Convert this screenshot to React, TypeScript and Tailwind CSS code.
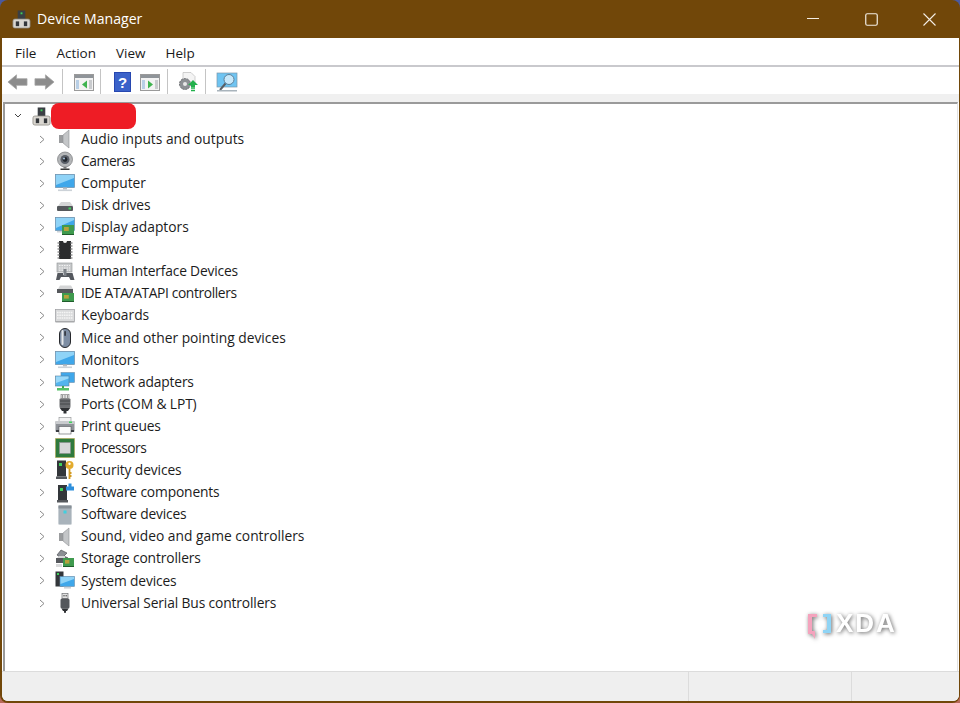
import type { ReactNode } from 'react';

const font = "font-['Open_Sans','Noto_Sans',sans-serif]";

// tower with the green light, used by the root node and the title bar
function DeviceIcon({ size = 20 }: { size?: number }) {
    return (
        <svg width={size} height={size} viewBox="0 0 20 20">
            <rect x="6" y="0.5" width="8" height="10" fill="#3b3f44" />
            <rect x="9" y="2.5" width="2" height="2" fill="#3fd05a" />
            <rect x="1" y="9.5" width="18" height="9.5" rx="2" fill="#d9d6d0" stroke="#8b8880" strokeWidth="0.8" />
            <rect x="4" y="12" width="3.5" height="5" fill="#33363a" />
            <rect x="12.5" y="12" width="3.5" height="5" fill="#33363a" />
        </svg>
    );
}

function Speaker() {
    return (
        <svg width="20" height="20" viewBox="0 0 20 20">
            <rect x="4" y="6" width="5" height="8" fill="#9a9c9e" />
            <path d="M8 6 L14 1 V19 L8 14 Z" fill="#c4c6c8" stroke="#8f9193" strokeWidth="0.6" />
        </svg>
    );
}

function Monitor() {
    return (
        <svg width="20" height="20" viewBox="0 0 20 20">
            <rect x="0.5" y="1.5" width="19" height="13" fill="#3fa7ea" stroke="#6d8ea8" strokeWidth="0.7" />
            <path d="M1 2h18v3L1 12z" fill="#8fd3f7" />
            <rect x="8" y="14.5" width="4" height="2" fill="#b6bcc2" />
            <rect x="3" y="16.5" width="14" height="1.6" fill="#ccd2d8" />
        </svg>
    );
}

function Board({ x, y, w = 10, h = 8 }: { x: number; y: number; w?: number; h?: number }) {
    return (
        <g>
            <rect x={x} y={y} width={w} height={h} fill="#3f9a4e" />
            <rect x={x + 2} y={y + 2} width={w / 2.5} height={h / 2.5} fill="#b7a23c" />
            <rect x={x} y={y + h - 1} width={w} height="1" fill="#1f5c2c" />
        </g>
    );
}

const icons: Record<string, ReactNode> = {
    audio: <Speaker />,
    camera: (
        <svg width="20" height="20" viewBox="0 0 20 20">
            <circle cx="10" cy="8.5" r="7.5" fill="#b4b6b8" stroke="#77797b" strokeWidth="0.7" />
            <circle cx="10" cy="8.5" r="4.5" fill="#5a5f68" />
            <circle cx="10" cy="8.5" r="2.4" fill="#23272e" />
            <circle cx="9" cy="7.5" r="0.9" fill="#b8d4ee" />
            <rect x="8.5" y="16" width="3" height="1.5" fill="#777" />
            <rect x="5.5" y="17.5" width="9" height="1.5" fill="#3a3a3a" />
        </svg>
    ),
    monitor: <Monitor />,
    disk: (
        <svg width="20" height="20" viewBox="0 0 20 20">
            <path d="M3 11 L6 7 H15 L18 11 Z" fill="#d4d5d6" />
            <rect x="2" y="11" width="16" height="5" rx="1" fill="#55585c" />
            <rect x="13.5" y="12.5" width="2.5" height="2" fill="#3fd05a" />
        </svg>
    ),
    display: (
        <svg width="20" height="20" viewBox="0 0 20 20">
            <rect x="0.5" y="0.5" width="19" height="13" fill="#3fa7ea" stroke="#6d8ea8" strokeWidth="0.7" />
            <path d="M1 1h18v2L1 11z" fill="#8fd3f7" />
            <rect x="2" y="14" width="6" height="1.5" fill="#ccd2d8" />
            <Board x={7} y={8} w={12} h={10} />
        </svg>
    ),
    firmware: (
        <svg width="20" height="20" viewBox="0 0 20 20">
            <rect x="4" y="1" width="12" height="18" fill="#2b2c2e" />
            <path d="M8 1a2 2 0 0 0 4 0z" fill="#f2f2f2" />
            <path d="M2.5 3h2M2.5 6h2M2.5 9h2M2.5 12h2M2.5 15h2M2.5 18h2M15.5 3h2M15.5 6h2M15.5 9h2M15.5 12h2M15.5 15h2M15.5 18h2" stroke="#8f8f8f" strokeWidth="1.3" />
        </svg>
    ),
    hid: (
        <svg width="20" height="20" viewBox="0 0 20 20">
            <rect x="2" y="1" width="15" height="9" fill="#c8cacc" stroke="#8d8f91" strokeWidth="0.6" />
            <path d="M4 3.5h11M4 6h11M4 8.2h11" stroke="#f2f2f2" strokeWidth="1" strokeDasharray="1.5 1" />
            <path d="M1 18 L2.5 11 H8 V13 H11 V11 H17.5 L19.5 18 H15.5 L14 15 H6 L4.5 18 Z" fill="#54585e" />
            <rect x="8.5" y="7" width="3" height="7" fill="#7c8187" />
        </svg>
    ),
    ide: (
        <svg width="20" height="20" viewBox="0 0 20 20">
            <path d="M3 5 L5 1.5 H16 L18 5 Z" fill="#d4d5d6" />
            <rect x="2" y="5" width="16" height="4" fill="#55585c" />
            <Board x={7} y={9} w={12} h={9} />
        </svg>
    ),
    keyboard: (
        <svg width="20" height="20" viewBox="0 0 20 20">
            <rect x="0.5" y="3.5" width="19" height="12" fill="#d9dadb" stroke="#9b9c9e" strokeWidth="0.7" />
            <path d="M2 6.5h16M2 9.2h16M2 12h16" stroke="#f5f5f5" strokeWidth="1.4" strokeDasharray="1.6 0.7" />
            <rect x="0.5" y="15" width="19" height="1.5" fill="#a8a9ab" />
        </svg>
    ),
    mouse: (
        <svg width="20" height="20" viewBox="0 0 20 20">
            <rect x="4.5" y="0.5" width="11" height="19" rx="5.5" fill="#7d8da3" stroke="#26282c" strokeWidth="1" />
            <rect x="6.5" y="2" width="2" height="15" rx="1" fill="#e4e7ea" />
            <rect x="9.3" y="3" width="1.6" height="5" rx="0.8" fill="#31353b" />
        </svg>
    ),
    network: (
        <svg width="20" height="20" viewBox="0 0 20 20">
            <rect x="6" y="0.5" width="13.5" height="10" fill="#3fa7ea" stroke="#6d8ea8" strokeWidth="0.6" />
            <rect x="0.5" y="4" width="13.5" height="10" fill="#52b4ee" stroke="#5d7f98" strokeWidth="0.6" />
            <path d="M1 4.5h12.5v2L1 11z" fill="#9ad8f8" />
            <path d="M8 14v2" stroke="#3fa54e" strokeWidth="2" />
            <rect x="2" y="16" width="12" height="2.5" fill="#55c066" />
        </svg>
    ),
    ports: (
        <svg width="20" height="20" viewBox="0 0 20 20">
            <rect x="6" y="0.5" width="8" height="4" fill="#e6e6e6" stroke="#777" strokeWidth="0.6" />
            <path d="M7.5 1v3M10 1v3M12.5 1v3" stroke="#777" strokeWidth="0.7" />
            <rect x="4.5" y="4.5" width="11" height="9" rx="1" fill="#6c6e71" />
            <path d="M5 7h10M5 10h10" stroke="#3b3d40" strokeWidth="0.8" />
            <path d="M4.5 13.5h11L13 17h-6z" fill="#2f3134" />
            <rect x="8.5" y="17" width="3" height="2.5" fill="#2f3134" />
        </svg>
    ),
    print: (
        <svg width="20" height="20" viewBox="0 0 20 20">
            <rect x="4" y="1.5" width="12" height="4" fill="#f2f2f2" stroke="#8d8f91" strokeWidth="0.6" />
            <rect x="0.5" y="5" width="19" height="11" rx="1" fill="#8f9398" />
            <rect x="0.5" y="5" width="19" height="3" fill="#c9cbce" />
            <rect x="14" y="5.5" width="3" height="1.5" fill="#3fd05a" />
            <rect x="4" y="10.5" width="12" height="7.5" fill="#fbfbfb" stroke="#55585c" strokeWidth="0.6" />
            <rect x="1" y="14" width="3" height="2" fill="#3a3d41" />
            <rect x="16" y="14" width="3" height="2" fill="#3a3d41" />
        </svg>
    ),
    cpu: (
        <svg width="20" height="20" viewBox="0 0 20 20">
            <rect x="0.5" y="0.5" width="19" height="19" fill="#2f7a3d" stroke="#b7a23c" strokeWidth="1" strokeDasharray="1 1" />
            <rect x="4.5" y="4.5" width="11" height="11" fill="#d6d7d8" stroke="#8b8d8f" strokeWidth="0.6" />
        </svg>
    ),
    security: (
        <svg width="20" height="20" viewBox="0 0 20 20">
            <rect x="2" y="0.5" width="9" height="16" fill="#33363a" />
            <rect x="4" y="3" width="3" height="3" fill="#3fd05a" />
            <rect x="1" y="16.5" width="11" height="2.5" fill="#55585c" />
            <circle cx="14.5" cy="5" r="4" fill="#e3ab2d" />
            <circle cx="14.5" cy="3.8" r="1.2" fill="#fff" />
            <path d="M14.5 9v10M14.5 13h2M14.5 16h2" stroke="#d29a22" strokeWidth="1.8" />
        </svg>
    ),
    component: (
        <svg width="20" height="20" viewBox="0 0 20 20">
            <rect x="3" y="2" width="9" height="15" fill="#33363a" />
            <rect x="5" y="5" width="3" height="3" fill="#3fd05a" />
            <rect x="2" y="17" width="11" height="2.5" fill="#55585c" />
            <rect x="11" y="3.5" width="8" height="4" fill="#2e8fdc" />
            <rect x="13.5" y="0.5" width="3" height="3.5" fill="#2e8fdc" />
        </svg>
    ),
    software: (
        <svg width="20" height="20" viewBox="0 0 20 20">
            <rect x="3.5" y="0.5" width="13" height="19" rx="1" fill="#a9b3bb" stroke="#c9cfd4" strokeWidth="0.8" />
            <rect x="3.5" y="0.5" width="13" height="3" fill="#878f96" />
            <rect x="8.5" y="5.5" width="3" height="3" fill="#3fd0e0" />
        </svg>
    ),
    storage: (
        <svg width="20" height="20" viewBox="0 0 20 20">
            <path d="M2 6 L6 1 L12 4 L9 7 L13 9 L6 9 Z" fill="#8b8f94" stroke="#3f4246" strokeWidth="0.6" />
            <rect x="1" y="9" width="9" height="5" fill="#55585c" />
            <path d="M2 9 L4 7 H10 V9 Z" fill="#d4d5d6" />
            <Board x={8} y={9} w={11} h={9} />
            <rect x="1" y="15" width="6" height="3" fill="#d9dadb" />
        </svg>
    ),
    system: (
        <svg width="20" height="20" viewBox="0 0 20 20">
            <rect x="0.5" y="0.5" width="8" height="15" fill="#33363a" />
            <rect x="2" y="2" width="2" height="2" fill="#3fd05a" />
            <rect x="5" y="5.5" width="14.5" height="10" fill="#3fa7ea" stroke="#6d8ea8" strokeWidth="0.6" />
            <path d="M5.5 6h13.5v2L5.5 13z" fill="#8fd3f7" />
            <rect x="9" y="16" width="7" height="1.6" fill="#ccd2d8" />
        </svg>
    ),
    usb: (
        <svg width="20" height="20" viewBox="0 0 20 20">
            <rect x="7" y="0.5" width="6" height="5" fill="#e2e2e2" stroke="#6f7174" strokeWidth="0.7" />
            <rect x="8.4" y="2" width="1.2" height="1.4" fill="#555" />
            <rect x="10.6" y="2" width="1.2" height="1.4" fill="#555" />
            <rect x="5.5" y="5.5" width="9" height="10" rx="1.5" fill="#54575b" />
            <path d="M6.5 15.5h7L12 18H8z" fill="#2f3134" />
            <rect x="9" y="18" width="2" height="1.8" fill="#2f3134" />
        </svg>
    ),
};

const devices = [
    ['Audio inputs and outputs', 'audio', ''],
    ['Cameras', 'camera', 'tracking-[-0.4px]'],
    ['Computer', 'monitor', ''],
    ['Disk drives', 'disk', ''],
    ['Display adaptors', 'display', ''],
    ['Firmware', 'firmware', 'tracking-[-0.35px]'],
    ['Human Interface Devices', 'hid', 'tracking-[-0.18px]'],
    ['IDE ATA/ATAPI controllers', 'ide', 'tracking-[-0.38px]'],
    ['Keyboards', 'keyboard', ''],
    ['Mice and other pointing devices', 'mouse', ''],
    ['Monitors', 'monitor', ''],
    ['Network adapters', 'network', 'tracking-[-0.18px]'],
    ['Ports (COM & LPT)', 'ports', 'tracking-[-0.12px]'],
    ['Print queues', 'print', 'tracking-[-0.18px]'],
    ['Processors', 'cpu', 'tracking-[-0.5px]'],
    ['Security devices', 'security', 'tracking-[-0.12px]'],
    ['Software components', 'component', 'tracking-[-0.15px]'],
    ['Software devices', 'software', 'tracking-[-0.18px]'],
    ['Sound, video and game controllers', 'audio', ''],
    ['Storage controllers', 'storage', 'tracking-[-0.12px]'],
    ['System devices', 'system', 'tracking-[-0.15px]'],
    ['Universal Serial Bus controllers', 'usb', 'tracking-[-0.13px]'],
];

function Arrow({ flip }: { flip?: boolean }) {
    return (
        <svg width="21" height="18" viewBox="0 0 22 18" className={flip ? '-scale-x-100' : ''}>
            <path d="M1 9 L10 1.5 V5.5 H21 V12.5 H10 V16.5 Z" fill="#8c8c8c" stroke="#a6a6a6" strokeWidth="0.8" />
        </svg>
    );
}

function PaneIcon({ right }: { right?: boolean }) {
    return (
        <svg width="20" height="17" viewBox="0 0 20 17">
            <rect x="0.5" y="0.5" width="19" height="16" fill="#f3f3f3" stroke="#9a9a9a" />
            <rect x="1" y="1" width="18" height="3" fill="#8f9499" />
            <rect x="2" y="6" width="3" height="9" fill="#b8cfe6" />
            <rect x="15" y="6" width="3" height="9" fill="#c9cbce" />
            <path d={right ? 'M8 6.5 L13 10.5 L8 14.5 Z' : 'M13 6.5 L8 10.5 L13 14.5 Z'} fill="#3fb34f" />
        </svg>
    );
}

function Sep() {
    return <div className="w-px h-[26px] bg-[#c4c4c4]" />;
}

export default function App() {
    return (
        <div className="w-[960px] h-[703px] bg-gradient-to-b from-[#4a5aa0] to-[#b86a5a] overflow-hidden">
            <div className={`${font} w-[960px] h-[703px] bg-[#714709] rounded-[8px] overflow-hidden flex flex-col`}>
                {/* title bar */}
                <div className="h-[38px] shrink-0 flex items-center pl-[12px] text-white">
                    <DeviceIcon size={19} />
                    <span className="ml-[6px] text-[14.1px]">Device Manager</span>
                    <div className="ml-auto flex items-center">
                        <svg width="12" height="2" className="mr-[46px]"><rect width="12" height="1" fill="#f3ede4" /></svg>
                        <svg width="13" height="13" className="mr-[45px]"><rect x="0.75" y="0.75" width="11.5" height="11.5" rx="1.5" fill="none" stroke="#f3ede4" strokeWidth="1.2" /></svg>
                        <svg width="13" height="13" className="mr-[24px]"><path d="M0.5 0.5 L12.5 12.5 M12.5 0.5 L0.5 12.5" stroke="#f3ede4" strokeWidth="1.1" /></svg>
                    </div>
                </div>

                <div className="flex-1 ml-[2px] mr-[1px] mb-[2px] bg-white flex flex-col rounded-b-[6px] overflow-hidden">
                    {/* menu bar */}
                    <div className="h-[29px] shrink-0 flex items-center pt-[4px] pl-[13px] gap-[20px] text-[13.5px] text-[#1a1a1a] border-b-2 border-[#c9c9cd]">
                        <span>File</span>
                        <span>Action</span>
                        <span>View</span>
                        <span>Help</span>
                    </div>

                    {/* toolbar */}
                    <div className="h-[27px] shrink-0 flex items-center pl-[5px] pt-[3px]">
                        <Arrow />
                        <div className="w-[6px]" />
                        <Arrow flip />
                        <div className="w-[7px]" />
                        <Sep />
                        <div className="w-[11px]" />
                        <PaneIcon />
                        <div className="w-[6px]" />
                        <Sep />
                        <div className="w-[13px]" />
                        <svg width="17" height="20" viewBox="0 0 17 20">
                            <rect width="17" height="20" fill="#2747b0" />
                            <rect x="1" y="1" width="15" height="18" fill="#3b62c9" />
                            <text x="8.5" y="15.5" textAnchor="middle" fontSize="15" fontWeight="700" fill="#fff" fontFamily="Liberation Sans">?</text>
                        </svg>
                        <div className="w-[9px]" />
                        <PaneIcon right />
                        <div className="w-[7px]" />
                        <Sep />
                        <div className="w-[10px]" />
                        <svg width="20" height="20" viewBox="0 0 20 20">
                            <path d="M5 0.5h8l4 4v7H5z" fill="#f4f4f4" stroke="#bdbdbd" strokeWidth="0.7" />
                            <circle cx="7" cy="12" r="5.5" fill="#8d9094" stroke="#6a6c70" strokeDasharray="2 1" />
                            <circle cx="7" cy="12" r="2" fill="#e8e8e8" />
                            <path d="M15 8 L20 13 H17 V15 H13 V13 H10 Z" fill="#22b14c" />
                            <path d="M13 16h4M13 18.5h4" stroke="#22b14c" strokeWidth="1.4" />
                        </svg>
                        <div className="w-[7px]" />
                        <Sep />
                        <div className="w-[10px]" />
                        <svg width="22" height="21" viewBox="0 0 22 21">
                            <rect x="1" y="1" width="20" height="14" fill="#6ec4f2" stroke="#7c97aa" strokeWidth="0.7" />
                            <circle cx="13" cy="7.5" r="5" fill="#c7e8fa" stroke="#5e7f97" />
                            <path d="M9.5 11.5 L4 18" stroke="#5a5f64" strokeWidth="2" />
                            <rect x="1" y="18" width="20" height="1.5" fill="#a9b4bc" />
                        </svg>
                    </div>

                    {/* strip above the tree */}
                    <div className="h-[8px] shrink-0 bg-[#f0f0f0]" />

                    {/* device tree */}
                    <div className="flex-1 min-h-0 ml-[1px] mr-[1px] border-t-2 border-l-2 border-[#9a9a9a] border-r border-r-[#e2e2e2] bg-white relative">
                        <div className="h-[24px] flex items-center">
                            <svg width="8" height="6" viewBox="0 0 8 6" className="ml-[9px]">
                                <path d="M1 1 L4 4 L7 1" fill="none" stroke="#444" strokeWidth="1" />
                            </svg>
                            <div className="ml-[10px]">
                                <DeviceIcon size={19} />
                            </div>
                            <div className="w-[85px] h-[26px] bg-[#ee1c25] rounded-[8px] shrink-0" />
                        </div>
                        <ul className="text-[13.8px] text-[#1c1c1c]">
                            {devices.map(([label, icon, tight]) => (
                                <li key={label} className="h-[22.1px] flex items-center">
                                    <svg width="6" height="9" viewBox="0 0 6 9" className="ml-[34px]">
                                        <path d="M1 1 L5 4.5 L1 8" fill="none" stroke="#8a8a8a" strokeWidth="1" />
                                    </svg>
                                    <span className="ml-[10px] w-[20px] h-[20px] flex">{icons[icon]}</span>
                                    <span className={`ml-[6px] whitespace-nowrap ${tight}`}>{label}</span>
                                </li>
                            ))}
                        </ul>

                        {/* watermark */}
                        <div className="absolute left-[802px] top-[509px] flex items-start drop-shadow-[1px_1px_2px_rgba(0,0,0,0.6)]">
                            <svg width="25" height="28" viewBox="0 0 25 28">
                                <path d="M1 1h9v3H5v14H8v8l-3-5H1z" fill="#f4a3bd" />
                                <path d="M16 1h8v19h-8v-3h4V4h-4z" fill="#8fd4f5" />
                            </svg>
                            <span className="ml-[4px] text-[26px] leading-[20px] tracking-[2px] text-white font-bold font-['Liberation_Sans',sans-serif]">XDA</span>
                        </div>
                    </div>

                    {/* status bar */}
                    <div className="h-[30px] shrink-0 flex bg-[#efefef] border-t border-[#dcdcdc]">
                        <div className="w-[687px] border-r border-[#dcdcdc]" />
                        <div className="w-[163px] border-r border-[#dcdcdc]" />
                    </div>
                </div>
            </div>
        </div>
    );
}
